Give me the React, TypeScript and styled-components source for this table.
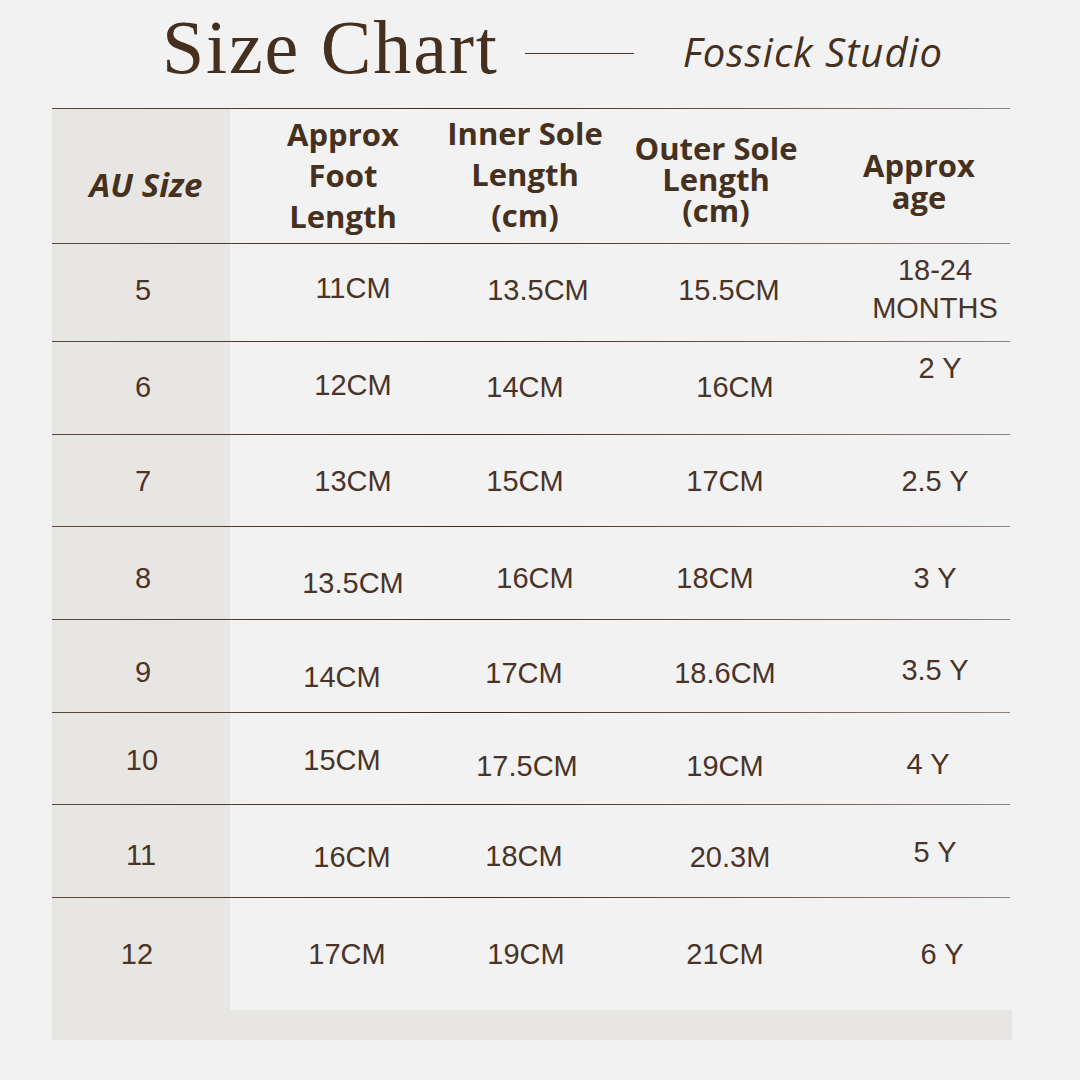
import styled, { createGlobalStyle } from 'styled-components';

const INK = '#46311f';

const GlobalStyle = createGlobalStyle`
  html, body {
    margin: 0;
    padding: 0;
    background: #f2f2f2;
  }
  * {
    box-sizing: border-box;
  }
`;

const Page = styled.div`
  width: 1080px;
  height: 1080px;
  background: #f2f2f2;
  color: ${INK};
  overflow: hidden;
`;

const Header = styled.header`
  display: flex;
  align-items: flex-start;
  height: 108px;
  padding-left: 162px;
`;

const Title = styled.h1`
  margin: 9px 0 0;
  font-family: 'Liberation Serif', serif;
  font-weight: 400;
  font-size: 76px;
  line-height: 76px;
  letter-spacing: 1.8px;
  color: #45301f;
`;

const Divider = styled.span`
  display: block;
  width: 109px;
  height: 1px;
  margin: 53px 0 0 26px;
  background: #4a3428;
`;

const Brand = styled.span`
  margin: 32px 0 0 49px;
  font-family: 'Open Sans', sans-serif;
  font-style: italic;
  font-size: 40px;
  line-height: 40px;
  letter-spacing: 1px;
  color: #45301f;
`;

const Table = styled.div`
  width: 958px;
  margin-left: 52px;
`;

const Row = styled.div<{ $height: number }>`
  display: grid;
  grid-template-columns: 178px 226px 138px 244px 172px;
  height: ${({ $height }) => $height}px;
  position: relative;

  &::before {
    content: '';
    position: absolute;
    left: 0;
    right: 0;
    top: 0;
    height: 1px;
    background: linear-gradient(90deg, #5a463a 0%, #3f2b1f 45%, #8f847c 100%);
  }
`;

const Cell = styled.div<{ $shaded?: boolean }>`
  display: flex;
  align-items: center;
  justify-content: center;
  background: ${({ $shaded }) => ($shaded ? '#e8e6e2' : 'transparent')};
  text-align: center;
`;

const HeadText = styled.div<{ $lh: number; $size: number; $italic?: boolean }>`
  font-family: 'Open Sans', sans-serif;
  font-weight: 700;
  font-style: ${({ $italic }) => ($italic ? 'italic' : 'normal')};
  font-size: ${({ $size }) => $size}px;
  line-height: ${({ $lh }) => $lh}px;
  color: ${INK};
  white-space: nowrap;
`;

const Value = styled.div`
  font-family: 'Liberation Sans', Arial, sans-serif;
  font-size: 29px;
  line-height: 38px;
  color: #4a3428;
  white-space: nowrap;
`;

const BottomBar = styled.div`
  width: 960px;
  height: 30px;
  margin-left: 52px;
  background: #e8e6e2;
`;

type Head = { lines: string[]; lh: number; size: number; dx: number; dy: number; italic?: boolean };

const headers: Head[] = [
  { lines: ['AU Size'], lh: 40, size: 33, dx: 5, dy: 9, italic: true },
  { lines: ['Approx', 'Foot', 'Length'], lh: 41, size: 31, dx: 0, dy: 0 },
  { lines: ['Inner Sole', 'Length', '(cm)'], lh: 41, size: 31, dx: 0, dy: -1 },
  { lines: ['Outer Sole', 'Length', '(cm)'], lh: 31, size: 31, dx: 0, dy: 4 },
  { lines: ['Approx', 'age'], lh: 32, size: 31, dx: -5, dy: 5 },
];

// each cell: [text, dx, dy]
type V = [string, number, number];

const rows: { height: number; cells: V[] }[] = [
  {
    height: 98,
    cells: [['5', 2, -2], ['11CM', 10, -4], ['13.5CM', 13, -2], ['15.5CM', 13, -2], ['18-24\nMONTHS', 11, -3]],
  },
  {
    height: 93,
    cells: [['6', 2, -1], ['12CM', 10, -3], ['14CM', 0, -1], ['16CM', 19, -1], ['2 Y', 16, -20]],
  },
  {
    height: 92,
    cells: [['7', 2, 1], ['13CM', 10, 1], ['15CM', 0, 1], ['17CM', 9, 1], ['2.5 Y', 11, 1]],
  },
  {
    height: 93,
    cells: [['8', 2, 5], ['13.5CM', 10, 10], ['16CM', 10, 5], ['18CM', -1, 5], ['3 Y', 11, 5]],
  },
  {
    height: 93,
    cells: [['9', 2, 6], ['14CM', -1, 11], ['17CM', -1, 7], ['18.6CM', 9, 7], ['3.5 Y', 11, 4]],
  },
  {
    height: 92,
    cells: [['10', 1, 2], ['15CM', -1, 2], ['17.5CM', 2, 8], ['19CM', 9, 8], ['4 Y', 4, 6]],
  },
  {
    height: 93,
    cells: [['11', 0, 4], ['16CM', 9, 6], ['18CM', -1, 5], ['20.3M', 14, 6], ['5 Y', 11, 1]],
  },
  {
    height: 113,
    cells: [['12', -4, 0], ['17CM', 4, 0], ['19CM', 1, 0], ['21CM', 9, 0], ['6 Y', 18, 0]],
  },
];

const shift = (dx: number, dy: number) => ({ transform: `translate(${dx}px, ${dy}px)` });

const App = () => (
  <Page>
    <GlobalStyle />
    <Header>
      <Title>Size Chart</Title>
      <Divider />
      <Brand>Fossick Studio</Brand>
    </Header>

    <Table>
      <Row $height={135}>
        {headers.map((h, i) => (
          <Cell key={i} $shaded={i === 0}>
            <HeadText $lh={h.lh} $size={h.size} $italic={h.italic} style={shift(h.dx, h.dy)}>
              {h.lines.map((l) => (
                <div key={l}>{l}</div>
              ))}
            </HeadText>
          </Cell>
        ))}
      </Row>

      {rows.map((row, r) => (
        <Row key={r} $height={row.height}>
          {row.cells.map(([text, dx, dy], i) => (
            <Cell key={i} $shaded={i === 0}>
              <Value style={shift(dx, dy)}>
                {text.split('\n').map((l) => (
                  <div key={l}>{l}</div>
                ))}
              </Value>
            </Cell>
          ))}
        </Row>
      ))}
    </Table>
    <BottomBar />
  </Page>
);

export default App;
